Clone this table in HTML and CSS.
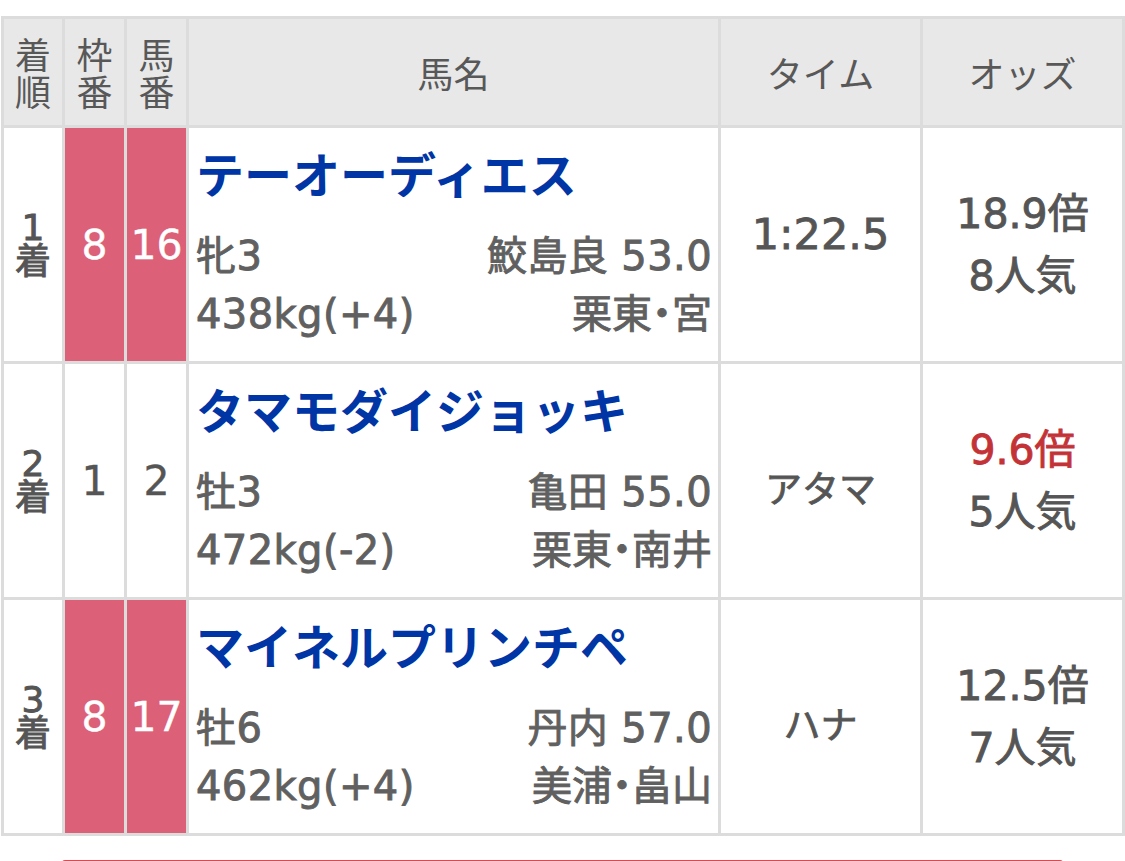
FILE: index.html
```html
<!DOCTYPE html>
<html lang="ja">
<head>
<meta charset="utf-8">
<link rel="stylesheet" href="styles.css">
</head>
<body>
<div class="result">
  <div class="cell head stack"><span>着</span><span>順</span></div>
  <div class="cell head stack"><span>枠</span><span>番</span></div>
  <div class="cell head stack"><span>馬</span><span>番</span></div>
  <div class="cell head">馬名</div>
  <div class="cell head">タイム</div>
  <div class="cell head">オッズ</div>

  <div class="cell rank"><span>1</span><span>着</span></div>
  <div class="cell waku">8</div>
  <div class="cell waku">16</div>
  <div class="cell horse">
    <div class="name">テーオーディエス</div>
    <div class="info"><span>牝3</span><span>鮫島良 53.0</span></div>
    <div class="info"><span>438kg(+4)</span><span class="stable">栗東・宮</span></div>
  </div>
  <div class="cell time time-num">1:22.5</div>
  <div class="cell odds"><span>18.9倍</span><span>8人気</span></div>

  <div class="cell rank"><span>2</span><span>着</span></div>
  <div class="cell plain">1</div>
  <div class="cell plain">2</div>
  <div class="cell horse">
    <div class="name">タマモダイジョッキ</div>
    <div class="info"><span>牡3</span><span>亀田 55.0</span></div>
    <div class="info"><span>472kg(-2)</span><span class="stable">栗東・南井</span></div>
  </div>
  <div class="cell time time-kana">アタマ</div>
  <div class="cell odds"><span class="fav">9.6倍</span><span>5人気</span></div>

  <div class="cell rank"><span>3</span><span>着</span></div>
  <div class="cell waku">8</div>
  <div class="cell waku">17</div>
  <div class="cell horse">
    <div class="name">マイネルプリンチペ</div>
    <div class="info"><span>牡6</span><span>丹内 57.0</span></div>
    <div class="info"><span>462kg(+4)</span><span class="stable">美浦・畠山</span></div>
  </div>
  <div class="cell time time-kana">ハナ</div>
  <div class="cell odds"><span>12.5倍</span><span>7人気</span></div>
</div>
<div class="more"></div>
</body>
</html>
```

FILE: styles.css
```css
html, body {
  margin: 0;
  padding: 0;
  background: #ffffff;
}

body {
  font-family: "DejaVu Sans", "Noto Sans CJK JP", sans-serif;
  color: #5c5c5c;
}

.result {
  display: grid;
  grid-template-columns: 58px 59px 59px 529px 199px 199px;
  grid-template-rows: 106px 233px 233px 233px;
  gap: 3px;
  padding: 3px;
  margin: 16px 0 0 1px;
  width: 1118px;
  background: #dcdcdc;
}

.cell {
  background: #ffffff;
  display: flex;
  align-items: center;
  justify-content: center;
  text-align: center;
}

.head {
  background: #e8e8e8;
  color: #585858;
  font-family: "Noto Sans CJK JP", sans-serif;
  font-size: 36px;
  line-height: 37px;
  font-weight: 400;
}

.stack,
.rank {
  flex-direction: column;
}

.stack span {
  display: block;
  height: 37px;
}

.rank {
  font-size: 36px;
  line-height: 34px;
  color: #555555;
  -webkit-text-stroke: 0.9px #555555;
}

.rank span {
  display: block;
  height: 34px;
}

.waku {
  background: #dc6078;
  color: #ffffff;
  font-size: 41px;
  font-weight: 400;
  -webkit-text-stroke: 0.4px #ffffff;
}

.plain {
  font-size: 41px;
  color: #555555;
  -webkit-text-stroke: 0.4px #555555;
}

.horse {
  flex-direction: column;
  align-items: stretch;
  justify-content: flex-start;
  text-align: left;
  padding: 0 6px 0 7px;
}

.name {
  font-family: "Noto Sans CJK JP", sans-serif;
  font-weight: 700;
  font-size: 48px;
  line-height: 88px;
  height: 88px;
  margin-bottom: 11px;
  color: #0035a5;
  white-space: nowrap;
}

.info {
  display: flex;
  justify-content: space-between;
  font-size: 40px;
  line-height: 58px;
  height: 58px;
  letter-spacing: 0.4px;
  color: #606060;
  white-space: nowrap;
  -webkit-text-stroke: 0.9px #606060;
}

.stable {
  font-feature-settings: "halt";
  letter-spacing: 0;
}

.time {
  font-size: 43px;
  color: #555555;
  -webkit-text-stroke: 0.8px #555555;
}

.time-num {
  padding-bottom: 22px;
}

.time-kana {
  font-family: "Noto Sans CJK JP", sans-serif;
  font-size: 37px;
  padding-top: 12px;
}

.odds {
  flex-direction: column;
  font-size: 41px;
  line-height: 62px;
  color: #555555;
  -webkit-text-stroke: 0.9px #555555;
}

.fav {
  color: #c33236;
  -webkit-text-stroke: 0.9px #c33236;
}

.more {
  margin: 24px 62px 0;
  height: 1px;
  border-top: 2px solid #d84a52;
  border-radius: 10px 10px 0 0;
}
```
